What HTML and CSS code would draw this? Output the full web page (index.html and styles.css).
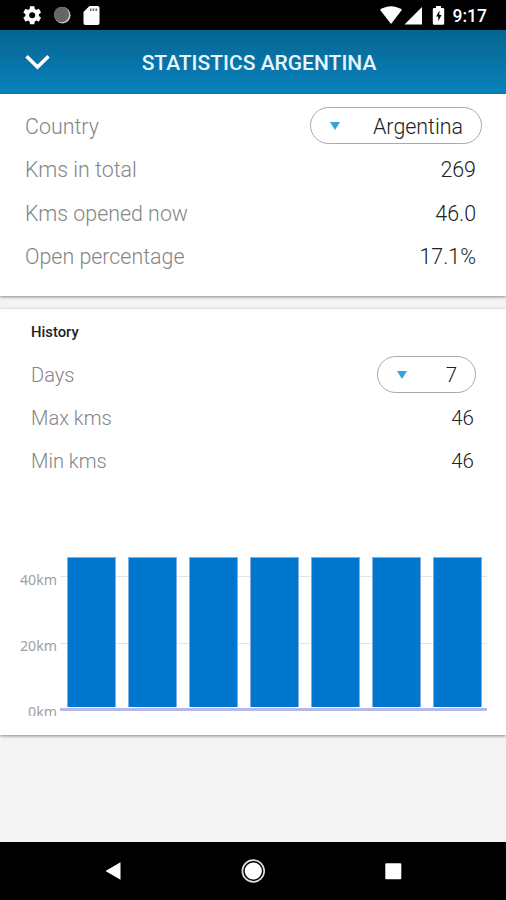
FILE: index.html
```html
<!DOCTYPE html>
<html lang="en">

<head>
  <meta charset="UTF-8">
  <meta name="viewport" content="width=device-width, initial-scale=1.0">
  <title>Statistics Argentina</title>
  <link rel="stylesheet" href="styles.css">
</head>

<body>

  <div class="status-bar">
    <svg class="status-left" width="80" height="30" viewBox="0 0 80 30">
      <g transform="translate(-1.1 3.9) scale(0.94)" fill="#fff">
        <path d="M19.14 12.94c.04-.3.06-.61.06-.94 0-.32-.02-.64-.07-.94l2.03-1.58a.49.49 0 0 0 .12-.61l-1.92-3.32a.49.49 0 0 0-.59-.22l-2.39.96c-.5-.38-1.03-.7-1.62-.94l-.36-2.54a.48.48 0 0 0-.48-.41h-3.84c-.24 0-.43.17-.47.41l-.36 2.54c-.59.24-1.13.57-1.62.94l-2.39-.96a.48.48 0 0 0-.59.22L2.74 8.87a.48.48 0 0 0 .12.61l2.03 1.58c-.05.3-.09.63-.09.94s.02.64.07.94l-2.03 1.58a.49.49 0 0 0-.12.61l1.92 3.32c.12.22.37.29.59.22l2.39-.96c.5.38 1.03.7 1.62.94l.36 2.54c.05.24.24.41.48.41h3.84c.24 0 .44-.17.47-.41l.36-2.54c.59-.24 1.13-.56 1.62-.94l2.39.96c.22.08.47 0 .59-.22l1.92-3.32a.48.48 0 0 0-.12-.61zM12 15.2a3.2 3.2 0 1 1 0-6.4 3.2 3.2 0 0 1 0 6.4z"/>
      </g>
      <circle cx="40.4" cy="15.2" r="8.2" fill="#ccc"/>
      <circle cx="39.5" cy="14.5" r="7.700" fill="#666"/>
      <path d="M67.5 6h8q2 0 2 2v15q0 2-2 2h-12q-2 0-2-2V12z" fill="#fff"/>
      <path d="M68.7 8.500v2.400M71.5 8.500v2.400M74.3 8.500v2.400" stroke="#666" stroke-width="1.600"/>
    </svg>
    <div class="status-right">
      <svg width="66" height="30" viewBox="0 0 66 30">
        <path d="M1 9.8C7.5 5 16.500 5 23 9.800L12 24z" fill="#fff"/>
        <path d="M43 7v17.500H25.500z" fill="#fff"/>
        <path d="M57 6h5v2h2q1.200 0 1.200 1.200v14q0 1.500-1.200 1.500h-9q-1.200 0-1.200-1.500v-14Q53.800 8 55 8h2z" fill="#fff"/>
        <path d="M60.500 10.500l-3.400 6h2.200v4.700l3.200-6.200h-2.200z" fill="#000"/>
      </svg>
      <span class="clock">9:17</span>
    </div>
  </div>

  <header class="header">
    <svg class="chevron" width="28" height="20" viewBox="0 0 28 20">
      <path d="M2.500 4.300L13.500 15L24.500 4.300" fill="none" stroke="#fff" stroke-width="3.500"/>
    </svg>
    <h1>STATISTICS ARGENTINA</h1>
  </header>

  <main>
    <section class="card summary">
      <div class="row">
        <span class="label">Country</span>
        <div class="select country"><i class="arrow"></i><span>Argentina</span></div>
      </div>
      <div class="row"><span class="label">Kms in total</span><span class="value">269</span></div>
      <div class="row"><span class="label">Kms opened now</span><span class="value">46.0</span></div>
      <div class="row"><span class="label">Open percentage</span><span class="value">17.1%</span></div>
    </section>

    <section class="card history">
      <h2>History</h2>
      <div class="row">
        <span class="label">Days</span>
        <div class="select days"><i class="arrow"></i><span>7</span></div>
      </div>
      <div class="row"><span class="label">Max kms</span><span class="value">46</span></div>
      <div class="row"><span class="label">Min kms</span><span class="value">46</span></div>

      <div class="chart">
        <div class="y-axis">
          <span>40km</span>
          <span>20km</span>
          <span>0km</span>
        </div>
        <div class="plot">
          <div class="bar"></div>
          <div class="bar"></div>
          <div class="bar"></div>
          <div class="bar"></div>
          <div class="bar"></div>
          <div class="bar"></div>
          <div class="bar"></div>
        </div>
      </div>
    </section>
  </main>

  <nav class="nav-bar">
    <svg width="24" height="24" viewBox="0 0 24 24"><path d="M4.500 12L19.500 3.300v17.400z" fill="#fff"/></svg>
    <svg width="24" height="24" viewBox="0 0 24 24">
      <circle cx="12.300" cy="12" r="10.900" fill="none" stroke="#ddd" stroke-width="1.700"/>
      <circle cx="12.300" cy="12" r="8.600" fill="#fff"/>
    </svg>
    <svg width="24" height="24" viewBox="0 0 24 24"><rect x="4.300" y="4.200" width="16" height="16" rx="1" fill="#fff"/></svg>
  </nav>

</body>

</html>
```
FILE: styles.css
```css
* {
  box-sizing: border-box;
}

body {
  margin: 0;
  height: 900px;
  display: flex;
  flex-direction: column;
  overflow: hidden;
  background-color: #f4f4f4;
  font-family: Roboto, sans-serif;
}

/* status bar */
.status-bar {
  height: 30px;
  display: flex;
  justify-content: space-between;
  background-color: #000;
}

.status-left {
  margin-left: 22px;
}

.status-right {
  display: flex;
  padding-right: 19px;
}

.clock {
  width: 42px;
  text-align: right;
  color: #fff;
  font-size: 17.5px;
  font-weight: 500;
  line-height: 32px;
}

/* header */
.header {
  height: 64px;
  display: grid;
  grid-template-columns: 52px 1fr 40px;
  align-items: center;
  background: linear-gradient(#066591, #0982bd);
}

.chevron {
  margin-left: 24px;
}

.header h1 {
  margin: 2px 0 0;
  color: #e8f5ff;
  font-size: 21px;
  font-weight: 500;
  text-align: center;
  white-space: nowrap;
}

/* cards */
main {
  flex: 1;
}

.card {
  background-color: #fff;
  box-shadow: 0 1px 3px rgba(0, 0, 0, 0.45);
}

.summary {
  height: 202px;
  padding: 10px 30px 0 25px;
  margin-bottom: 13px;
}

.history {
  height: 426px;
  padding: 14px 32px 0 31px;
}

.history h2 {
  height: 30px;
  margin: 0;
  color: #222;
  font-size: 14.8px;
  font-weight: 500;
  line-height: 18px;
}

.row {
  height: 43.3px;
  display: flex;
  justify-content: space-between;
  align-items: center;
  font-size: 21.4px;
  font-weight: 300;
}

.summary span {
  padding-top: 2px;
}

.label {
  color: #858585;
}

.value {
  color: #222;
}

.history .row {
  font-size: 20.5px;
}

.history .label {
  font-size: 20.1px;
}

.select {
  height: 37px;
  display: flex;
  justify-content: space-between;
  align-items: center;
  border: 1px solid #aaa;
  border-radius: 19px;
  color: #222;
}

.country {
  width: 172px;
  margin-right: -6px;
  padding: 0 18px 0 19px;
}

.days {
  width: 99px;
  margin-right: -2px;
  padding: 0 18px 0 19px;
}

.arrow {
  border-left: 5px solid transparent;
  border-right: 5px solid transparent;
  border-top: 8px solid #359fe0;
}

/* chart */
.chart {
  height: 159px;
  display: flex;
  margin: 74px -13px 0 -31px;
  overflow: hidden;
}

.y-axis {
  width: 60px;
  display: flex;
  flex-direction: column;
  padding: 13px 3px 0 0;
  color: #a0a0a0;
  font-family: "Noto Sans", sans-serif;
  font-size: 14.2px;
  text-align: right;
}

/* one tick every 20km */
.y-axis span {
  height: 66px;
  flex-shrink: 0;
  line-height: 20px;
}

.plot {
  width: 427px;
  height: 154px;
  display: grid;
  grid-template-columns: repeat(7, 1fr);
  align-items: end;
  padding-bottom: 1px;
  border-bottom: 3px solid #b5b8e8;
  background: linear-gradient(#e2e4e8, #e2e4e8) 0 19px / 100% 1px no-repeat,
    linear-gradient(#e2e4e8, #e2e4e8) 0 86px / 100% 1px no-repeat;
}

.bar {
  height: 150px;
  margin: 0 5px 0 7px;
  border: 1px solid #85aee5;
  border-bottom: none;
  background-color: #0077ce;
}

/* navigation */
.nav-bar {
  height: 58px;
  display: flex;
  justify-content: space-between;
  align-items: center;
  padding: 0 101px;
  background-color: #000;
}
```
